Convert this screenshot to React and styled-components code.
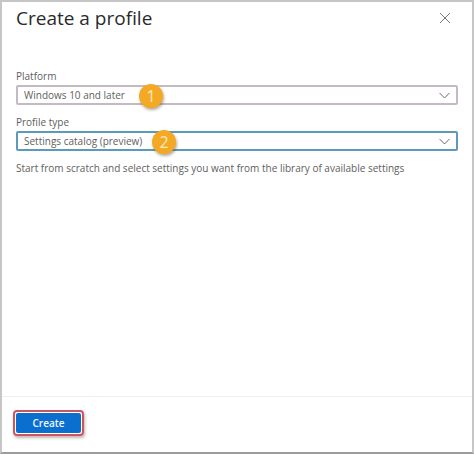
import React from 'react';
import styled, { createGlobalStyle } from 'styled-components';

const GlobalStyle = createGlobalStyle`
  html, body {
    margin: 0;
    padding: 0;
    background: #fff;
  }
  body {
    font-family: "Open Sans", "Liberation Sans", sans-serif;
  }
`;

const Frame = styled.div`
  box-sizing: border-box;
  width: 474px;
  height: 454px;
  display: flex;
  flex-direction: column;
  background: #fff;
  border-top: 2px solid #c6c6c6;
  border-left: 2px solid #c6c6c6;
  border-right: 2px solid #c6c6c6;
  border-bottom: 2px solid #9c9c9c;
`;

const Header = styled.div`
  display: flex;
  justify-content: space-between;
  align-items: center;
  height: 32px;
  padding: 0 21px 0 14px;
`;

const Title = styled.h1`
  margin: 0;
  font-size: 19px;
  font-weight: 400;
  line-height: 32px;
  color: #2b2b2b;
`;

const CloseIcon = styled.svg`
  width: 12px;
  height: 12px;
  display: block;
`;

const Body = styled.div`
  flex: 1;
  display: flex;
  flex-direction: column;
  padding: 34px 14px 0 14px;
`;

const Field = styled.div`
  display: flex;
  flex-direction: column;
  margin-bottom: 9px;
`;

const Label = styled.label`
  font-size: 10px;
  line-height: 16px;
  color: #5e5e5e;
  margin-bottom: 1px;
`;

const Select = styled.div`
  position: relative;
  box-sizing: border-box;
  height: 20px;
  display: flex;
  align-items: center;
  justify-content: space-between;
  padding: 0 6px 0 6px;
  border: 2px solid ${(p) => (p.$focused ? '#5c9abc' : '#c4bac4')};
  border-radius: 2px;
  font-size: 10px;
  color: #5e5e5e;
`;

const Chevron = styled.svg`
  width: 11px;
  height: 7px;
  display: block;
`;

const Badge = styled.span`
  position: absolute;
  top: 50%;
  left: ${(p) => p.$left}px;
  width: 24px;
  height: 24px;
  margin-top: -11px;
  border-radius: 50%;
  background: #f4a925;
  box-shadow: 1px 2px 3px rgba(90, 70, 30, 0.45);
  display: flex;
  align-items: center;
  justify-content: center;
  font-size: 16px;
  color: #fde9bf;
`;

const Hint = styled.p`
  margin: 0;
  font-size: 10px;
  line-height: 16px;
  color: #5e5e5e;
`;

const Footer = styled.div`
  height: 56px;
  box-sizing: border-box;
  border-top: 1px solid #efefef;
  padding: 13px 0 0 14px;
`;

const Highlight = styled.div`
  display: inline-block;
  margin-left: -3px;
  padding: 1px;
  border: 2px solid #cd5560;
  border-radius: 4px;
  box-shadow: 1px 2px 3px rgba(90, 40, 40, 0.35);
`;

const CreateButton = styled.button`
  display: block;
  width: 65px;
  height: 20px;
  padding: 0;
  border: 0;
  border-radius: 2px;
  background: #0a6fce;
  color: #f2f8fd;
  font-family: inherit;
  font-size: 10px;
  font-weight: 600;
`;

function Arrow() {
  return (
    <Chevron viewBox="0 0 11 7">
      <path d="M0.6 1 L5.5 6 L10.4 1" fill="none" stroke="#6a6a6a" strokeWidth="1" />
    </Chevron>
  );
}

export default function App() {
  return (
    <Frame>
      <GlobalStyle />
      <Header>
        <Title>Create a profile</Title>
        <CloseIcon viewBox="0 0 12 12">
          <path d="M1 1 L11 11 M11 1 L1 11" fill="none" stroke="#777" strokeWidth="1" />
        </CloseIcon>
      </Header>
      <Body>
        <Field>
          <Label>Platform</Label>
          <Select>
            Windows 10 and later
            <Badge $left={121}>1</Badge>
            <Arrow />
          </Select>
        </Field>
        <Field>
          <Label>Profile type</Label>
          <Select $focused>
            Settings catalog (preview)
            <Badge $left={134}>2</Badge>
            <Arrow />
          </Select>
        </Field>
        <Hint>Start from scratch and select settings you want from the library of available settings</Hint>
      </Body>
      <Footer>
        <Highlight>
          <CreateButton>Create</CreateButton>
        </Highlight>
      </Footer>
    </Frame>
  );
}
